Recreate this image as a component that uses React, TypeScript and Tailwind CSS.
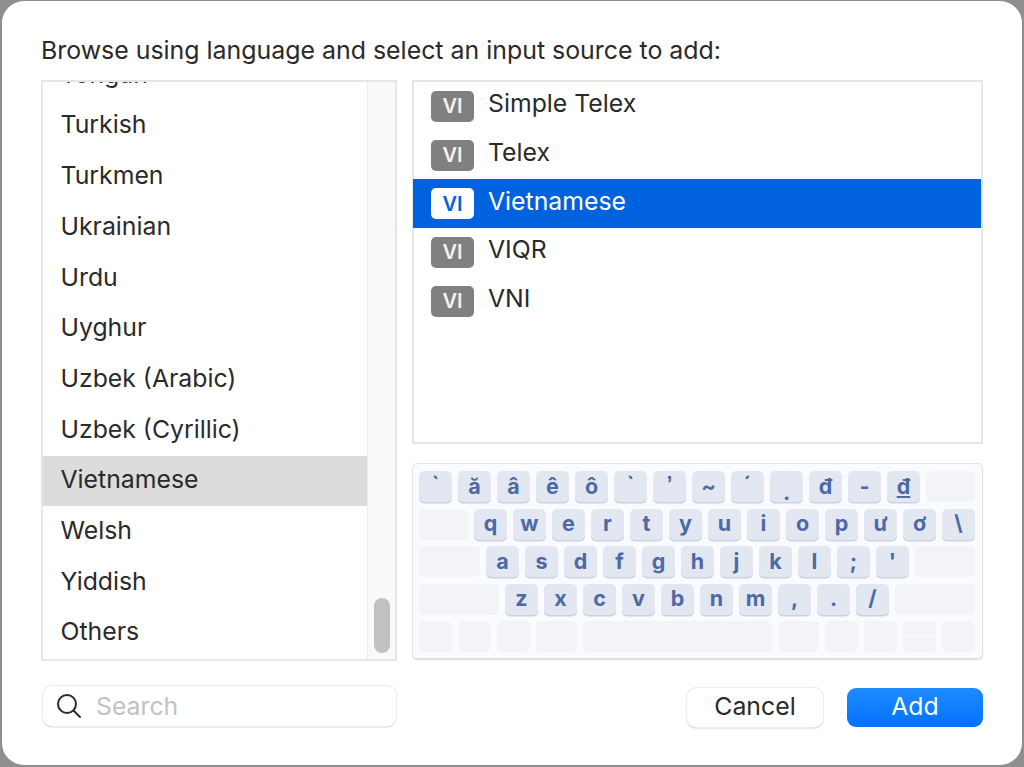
const languages = [
  "Tongan",
  "Turkish",
  "Turkmen",
  "Ukrainian",
  "Urdu",
  "Uyghur",
  "Uzbek (Arabic)",
  "Uzbek (Cyrillic)",
  "Vietnamese",
  "Welsh",
  "Yiddish",
  "Others",
];

const sources = ["Simple Telex", "Telex", "Vietnamese", "VIQR", "VNI"];

const rows: { blank: number; keys: string[]; end: number }[] = [
  { blank: 0, keys: ["`", "ă", "â", "ê", "ô", "`", "’", "~", "´", ".", "đ", "-", "đ"], end: 49 },
  { blank: 49, keys: ["q", "w", "e", "r", "t", "y", "u", "i", "o", "p", "ư", "ơ", "\\"], end: 0 },
  { blank: 61, keys: ["a", "s", "d", "f", "g", "h", "j", "k", "l", ";", "'"], end: 60 },
  { blank: 80, keys: ["z", "x", "c", "v", "b", "n", "m", ",", ".", "/"], end: 80 },
];

const bottomRow = [33, 33, 33, 41, 189, 41, 33, 33];

function Key({ label, className }: { label: string; className?: string }) {
  return (
    <div className="flex h-[31px] w-[33px] items-center justify-center rounded-[5px] bg-[#e3e7f1] text-[21.5px] font-bold leading-none text-[#4c6aa5] shadow-[0_1.5px_0_#c9d1e3]">
      <span className={className}>{label}</span>
    </div>
  );
}

function Blank({ width }: { width: number }) {
  return <div className="h-[31px] rounded-[5px] bg-[#f2f4f8]" style={{ width }} />;
}

// first row has dead keys that sit high or low in the cap
function topRowClass(j: number) {
  if (j === 12) return "underline";
  if (j === 9) return "relative top-[6px]";
  if (j === 6) return "relative top-[-2px] font-['Liberation_Sans']";
  if (j === 0 || j === 5 || j === 8) return "relative top-[-2px]";
  return "";
}

function Keyboard() {
  return (
    <div className="mt-[19px] flex h-[196px] flex-col gap-[6.5px] rounded-[5px] border border-[#e3e3e3] bg-[#fafbfe] px-[6px] pt-[7px] shadow-[0_1px_1px_rgba(0,0,0,0.15)]">
      {rows.map((row, i) => (
        <div key={i} className="flex gap-[6px]">
          {row.blank > 0 && <Blank width={row.blank} />}
          {row.keys.map((k, j) => (
            <Key key={j} label={k} className={i === 0 ? topRowClass(j) : ""} />
          ))}
          {row.end > 0 && <Blank width={row.end} />}
        </div>
      ))}
      <div className="flex gap-[6px]">
        {bottomRow.map((w, i) => (
          <Blank key={i} width={w} />
        ))}
        <div className="flex h-[31px] w-[33px] flex-col gap-[1px] overflow-hidden rounded-[5px]">
          <div className="flex-1 bg-[#f2f4f8]" />
          <div className="flex-1 bg-[#f2f4f8]" />
        </div>
        <Blank width={33} />
      </div>
    </div>
  );
}

function LanguageList() {
  return (
    <div className="flex h-[581px] w-[356px] overflow-hidden border-2 border-[#e6e6e6] bg-white">
      <div className="min-w-0 flex-1 overflow-hidden">
        <div className="mt-[-32px]">
          {languages.map((name) => (
            <div
              key={name}
              className={`flex h-[50.7px] items-center pb-[2px] pl-[17.5px] ${name === "Vietnamese" ? "bg-[#dcdcdc]" : ""}`}
            >
              {name}
            </div>
          ))}
        </div>
      </div>
      <div className="flex w-[28px] flex-col justify-end border-l border-[#ececec] bg-[#f9f9f9] pb-[6px] pl-[6px]">
        <div className="h-[55px] w-[16px] rounded-full bg-[#c1c1c1]" />
      </div>
    </div>
  );
}

function SourceList() {
  return (
    <div className="h-[364px] border-2 border-[#e6e6e6] bg-white">
      {sources.map((name) => {
        const selected = name === "Vietnamese";
        return (
          <div
            key={name}
            className={`flex h-[48.7px] items-center gap-[14px] pl-[17px] ${selected ? "ml-[-1px] bg-[#0162e0] pl-[18px] text-white" : ""}`}
          >
            <span
              className={`flex h-[31px] w-[43px] items-center justify-center rounded-[5px] text-[20px] font-semibold ${selected ? "bg-white text-[#0162e0]" : "bg-[#808080] text-[#f2f2f2]"}`}
            >
              VI
            </span>
            <span className="pb-[5px]">{name}</span>
          </div>
        );
      })}
    </div>
  );
}

export default function App() {
  return (
    <div className="h-[767px] w-[1024px] overflow-hidden bg-[#8e8e8e] pb-[2px] pl-[2px] pr-[2px] pt-[1px] font-['Inter',sans-serif] text-[24.8px] text-[#2a2a2a]">
      <div className="h-full rounded-[22px] bg-white px-[39px]">
        <div className="flex h-[79px] items-center whitespace-nowrap pt-[21px] text-[24.9px]">
          Browse using language and select an input source to add:
        </div>
        <div className="flex gap-[15px]">
          <LanguageList />
          <div className="w-[571px]">
            <SourceList />
            <Keyboard />
          </div>
        </div>
        <div className="mt-[25px] flex items-start justify-between">
          <div className="ml-[2px] flex h-[40px] w-[353px] items-center gap-[14px] rounded-[9px] bg-white pl-[13px] shadow-[0_0_0_1px_#ececec,0_1px_1.5px_rgba(0,0,0,0.4)]">
            <svg width="26" height="26" viewBox="0 0 26 26" fill="none" stroke="#2a2a2a" strokeWidth="2" strokeLinecap="round">
              <circle cx="11" cy="11" r="9" />
              <path d="M17.5 17.5 L24 24" />
            </svg>
            <span className="pt-[1px] text-[#c2c2c2]">Search</span>
          </div>
          <div className="mt-[2px] flex gap-[24px]">
            <button className="h-[39px] w-[136px] rounded-[9px] bg-white pb-[3px] shadow-[0_0_0_1px_#ececec,0_1px_2px_rgba(0,0,0,0.35)]">
              Cancel
            </button>
            <button className="h-[39px] w-[136px] rounded-[9px] bg-gradient-to-b from-[#1f8bff] to-[#0071fb] pb-[3px] text-white">
              Add
            </button>
          </div>
        </div>
      </div>
    </div>
  );
}
